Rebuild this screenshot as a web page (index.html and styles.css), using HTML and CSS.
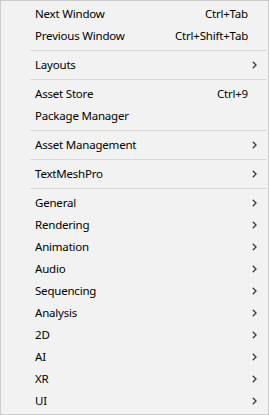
FILE: index.html
```html
<!DOCTYPE html>
<html lang="en">
<head>
    <meta charset="UTF-8" />
    <title>Window menu</title>
    <link rel="stylesheet" href="styles.css">
</head>
<body>
    <div class="menu">
        <div class="item"><span class="label">Next Window</span><span class="shortcut">Ctrl+Tab</span><span class="sub"></span></div>
        <div class="item"><span class="label">Previous Window</span><span class="shortcut">Ctrl+Shift+Tab</span><span class="sub"></span></div>
        <div class="separator"></div>
        <div class="item"><span class="label">Layouts</span><span class="sub"><svg width="5" height="8" viewBox="0 0 5 8"><polyline points="0.8,0.8 4,4 0.8,7.2" /></svg></span></div>
        <div class="separator"></div>
        <div class="item"><span class="label">Asset Store</span><span class="shortcut">Ctrl+9</span><span class="sub"></span></div>
        <div class="item"><span class="label">Package Manager</span><span class="sub"></span></div>
        <div class="separator"></div>
        <div class="item"><span class="label">Asset Management</span><span class="sub"><svg width="5" height="8" viewBox="0 0 5 8"><polyline points="0.8,0.8 4,4 0.8,7.2" /></svg></span></div>
        <div class="separator"></div>
        <div class="item"><span class="label">TextMeshPro</span><span class="sub"><svg width="5" height="8" viewBox="0 0 5 8"><polyline points="0.8,0.8 4,4 0.8,7.2" /></svg></span></div>
        <div class="separator"></div>
        <div class="item"><span class="label">General</span><span class="sub"><svg width="5" height="8" viewBox="0 0 5 8"><polyline points="0.8,0.8 4,4 0.8,7.2" /></svg></span></div>
        <div class="item"><span class="label">Rendering</span><span class="sub"><svg width="5" height="8" viewBox="0 0 5 8"><polyline points="0.8,0.8 4,4 0.8,7.2" /></svg></span></div>
        <div class="item"><span class="label">Animation</span><span class="sub"><svg width="5" height="8" viewBox="0 0 5 8"><polyline points="0.8,0.8 4,4 0.8,7.2" /></svg></span></div>
        <div class="item"><span class="label">Audio</span><span class="sub"><svg width="5" height="8" viewBox="0 0 5 8"><polyline points="0.8,0.8 4,4 0.8,7.2" /></svg></span></div>
        <div class="item"><span class="label">Sequencing</span><span class="sub"><svg width="5" height="8" viewBox="0 0 5 8"><polyline points="0.8,0.8 4,4 0.8,7.2" /></svg></span></div>
        <div class="item"><span class="label">Analysis</span><span class="sub"><svg width="5" height="8" viewBox="0 0 5 8"><polyline points="0.8,0.8 4,4 0.8,7.2" /></svg></span></div>
        <div class="item"><span class="label">2D</span><span class="sub"><svg width="5" height="8" viewBox="0 0 5 8"><polyline points="0.8,0.8 4,4 0.8,7.2" /></svg></span></div>
        <div class="item"><span class="label">AI</span><span class="sub"><svg width="5" height="8" viewBox="0 0 5 8"><polyline points="0.8,0.8 4,4 0.8,7.2" /></svg></span></div>
        <div class="item"><span class="label">XR</span><span class="sub"><svg width="5" height="8" viewBox="0 0 5 8"><polyline points="0.8,0.8 4,4 0.8,7.2" /></svg></span></div>
        <div class="item"><span class="label">UI</span><span class="sub"><svg width="5" height="8" viewBox="0 0 5 8"><polyline points="0.8,0.8 4,4 0.8,7.2" /></svg></span></div>
    </div>
</body>
</html>
```

FILE: styles.css
```css
body {
    margin: 0;
    background: #f2f2f2;
    font-family: "Noto Sans", "Open Sans", sans-serif;
    font-size: 11.5px;
    letter-spacing: -0.2px;
    color: #000;
}

.menu {
    box-sizing: border-box;
    width: 269px;
    height: 415px;
    padding: 2px 0;
    background: #f2f2f2;
    border: 1px solid #cccccc;
}

.item {
    display: flex;
    align-items: center;
    box-sizing: border-box;
    height: 22px;
    padding: 0 0 1px 34px;
}

.label {
    flex: 1;
    white-space: nowrap;
}

.shortcut {
    white-space: nowrap;
}

.sub {
    display: flex;
    align-items: center;
    width: 20px;
    height: 21px;
    padding-left: 4px;
    box-sizing: border-box;
}

.sub svg polyline {
    fill: none;
    stroke: #3a3a3a;
    stroke-width: 1.3;
}

.separator {
    height: 1px;
    margin: 3px 2px 3px 29px;
    background: #d7d7d7;
}
```
